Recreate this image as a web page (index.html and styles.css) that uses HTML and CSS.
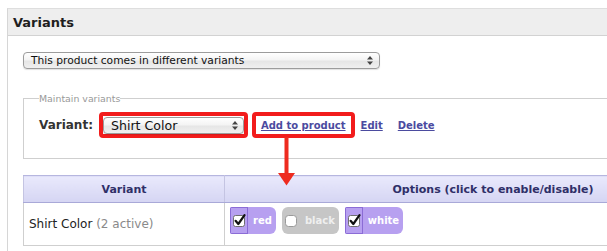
FILE: index.html
```html
<!DOCTYPE html>
<html>
<head>
<meta charset="utf-8">
<link rel="stylesheet" href="styles.css">
</head>
<body>
<div class="page">
  <div class="panel">
    <div class="panel-head">Variants</div>
    <div class="panel-body">
      <div class="sel sel-main">
        <span class="sel-text">This product comes in different variants</span>
        <svg class="updown" width="6" height="9" viewBox="0 0 6 9"><path d="M3 0 L6 3.5 H0 Z M3 9 L6 5.5 H0 Z" fill="#444"/></svg>
      </div>
      <fieldset class="maintain">
        <legend>Maintain variants</legend>
        <div class="vrow">
          <span class="lbl">Variant:</span>
          <span class="hl hl-sel">
            <span class="sel sel-var">
              <span class="sel-text">Shirt Color</span>
              <svg class="updown" width="6" height="9" viewBox="0 0 6 9"><path d="M3 0 L6 3.5 H0 Z M3 9 L6 5.5 H0 Z" fill="#444"/></svg>
            </span>
          </span>
          <span class="hl hl-link"><a class="lnk" href="#">Add to product</a></span>
          <a class="lnk lnk-edit" href="#">Edit</a>
          <a class="lnk lnk-del" href="#">Delete</a>
        </div>
      </fieldset>
      <table class="vtable">
        <thead>
          <tr><th class="c1">Variant</th><th class="c2">Options (click to enable/disable)</th></tr>
        </thead>
        <tbody>
          <tr>
            <td class="name">Shirt Color <span class="muted">(2 active)</span></td>
            <td class="opts">
              <div class="chips">
                <span class="chip on">
                  <span class="cb"><svg width="14" height="14" viewBox="0 0 14 14"><rect x="0.5" y="1.5" width="11" height="11" rx="2" fill="#fff" stroke="#6f6f6f"/><path d="M2.6 6.8 L5.3 10 L11.5 1.2" fill="none" stroke="#111" stroke-width="2.2" stroke-linecap="round" stroke-linejoin="round"/></svg></span>
                  <span class="ctext">red</span>
                </span>
                <span class="chip off">
                  <span class="cb"><svg width="12" height="12" viewBox="0 0 12 12"><rect x="0.5" y="0.5" width="11" height="11" rx="3" fill="#fff" stroke="#9a9a9a"/></svg></span>
                  <span class="ctext">black</span>
                </span>
                <span class="chip on">
                  <span class="cb"><svg width="14" height="14" viewBox="0 0 14 14"><rect x="0.5" y="1.5" width="11" height="11" rx="2" fill="#fff" stroke="#6f6f6f"/><path d="M2.6 6.8 L5.3 10 L11.5 1.2" fill="none" stroke="#111" stroke-width="2.2" stroke-linecap="round" stroke-linejoin="round"/></svg></span>
                  <span class="ctext">white</span>
                </span>
              </div>
            </td>
          </tr>
        </tbody>
      </table>
    </div>
  </div>
  <svg class="arrow" width="17" height="49" viewBox="0 0 17 49">
    <rect x="6.5" y="0" width="4" height="37" fill="#ee2b1f"/>
    <path d="M0 36 H17 L8.5 48.5 Z" fill="#ee2b1f"/>
  </svg>
</div>
</body>
</html>
```
FILE: styles.css
```css
html, body {
  margin: 0;
  padding: 0;
  background: #fff;
}
.page {
  position: relative;
  width: 607px;
  height: 251px;
  overflow: hidden;
  font-family: "DejaVu Sans", Verdana, sans-serif;
  color: #333;
}
.panel {
  margin: 8px 0 0 7px;
  width: 900px;
  height: 260px;
  border-left: 1px solid #d6d6d6;
  border-top: 1px solid #dedede;
}
.panel-head {
  height: 26px;
  line-height: 27px;
  padding-left: 5px;
  background: #eeeeee;
  border-bottom: 1px solid #d2d2d2;
  font-weight: bold;
  font-size: 13px;
  color: #1e1e1e;
}
.panel-body {
  padding: 16px 0 0 15px;
}
.sel {
  box-sizing: border-box;
  display: flex;
  align-items: center;
  justify-content: space-between;
  height: 17px;
  border: 1px solid #9c9c9c;
  border-radius: 4px;
  background: linear-gradient(#ffffff 0%, #f4f4f4 45%, #e6e6e6 55%, #f0f0f0 100%);
  box-shadow: 0 1px 1px rgba(0,0,0,0.12);
  color: #111;
}
.sel-main {
  width: 357px;
  padding: 0 6px 0 7px;
  font-size: 10.7px;
}
.sel-var {
  width: 141px;
  padding: 0 5px 0 7px;
  font-size: 12.6px;
}
.sel-text {
  white-space: nowrap;
}
.updown {
  display: block;
}
.maintain {
  margin: 23px 0 0 0;
  padding: 7px 0 20px 15px;
  width: 700px;
  border: 1px solid #cfcfcf;
  border-radius: 0;
}
.maintain legend {
  padding: 0;
  font-size: 9.4px;
  line-height: 13px;
  color: #999;
}
.vrow {
  display: flex;
  align-items: center;
  height: 26px;
}
.lbl {
  font-weight: bold;
  font-size: 12px;
  color: #333;
  margin-right: 6px;
}
.hl {
  box-sizing: border-box;
  display: inline-flex;
  align-items: center;
  height: 26px;
  border: 4px solid #f21c1c;
  border-radius: 4px;
}
.hl-sel {
  padding: 1px 0 0 0;
}
.hl-link {
  margin-left: 4px;
  padding: 0 5px;
}
.lnk {
  font-weight: bold;
  font-size: 10px;
  color: #4b4b9f;
  text-decoration: underline;
}
.lnk-edit {
  margin-left: 6px;
}
.lnk-del {
  margin-left: 15px;
}
.vtable {
  margin-top: 16px;
  width: 739px;
  border-collapse: collapse;
}
.vtable th {
  height: 26px;
  padding: 0;
  background: linear-gradient(#e9e9fc, #d5d5f3);
  color: #2f2f68;
  font-size: 11px;
  font-weight: bold;
  text-align: center;
  border-top: 1px solid #b6b6df;
  border-bottom: 1px solid #a9a9d8;
  border-left: 1px solid #c4c4e2;
  border-right: 1px solid #c4c4e2;
}
.vtable th.c1 {
  width: 200px;
}
.vtable td {
  height: 38px;
  border: 1px solid #cfcfcf;
  border-top: none;
  padding: 0;
}
.vtable td.name {
  padding-left: 5px;
  font-size: 12px;
  color: #222;
  vertical-align: middle;
}
.muted {
  color: #8a8a8a;
}
.vtable td.opts {
  vertical-align: top;
  padding: 4px 0 0 5px;
}
.chips {
  display: flex;
  gap: 6px;
}
.chip {
  display: inline-flex;
  align-items: center;
  height: 27px;
  box-sizing: border-box;
  border-radius: 6px;
  overflow: hidden;
  color: #fff;
  font-weight: bold;
  font-size: 10px;
}
.chip.on {
  background: #b7a0f0;
  border-radius: 2px 6px 6px 2px;
}
.chip.off {
  background: #c6c6c6;
  color: #efefef;
}
.chip .cb {
  display: flex;
  align-items: center;
  height: 100%;
  box-sizing: border-box;
}
.chip.on .cb {
  width: 18px;
  border: 1px solid #8b6cd6;
  padding-left: 2px;
}
.chip.off .cb {
  padding-left: 3px;
}
.chip.on .ctext {
  padding: 0 4px 0 5px;
}
.chip.off .ctext {
  padding: 0 4px 0 8px;
}
.cb svg {
  display: block;
}
.arrow {
  position: absolute;
  left: 278px;
  top: 137px;
}
```
